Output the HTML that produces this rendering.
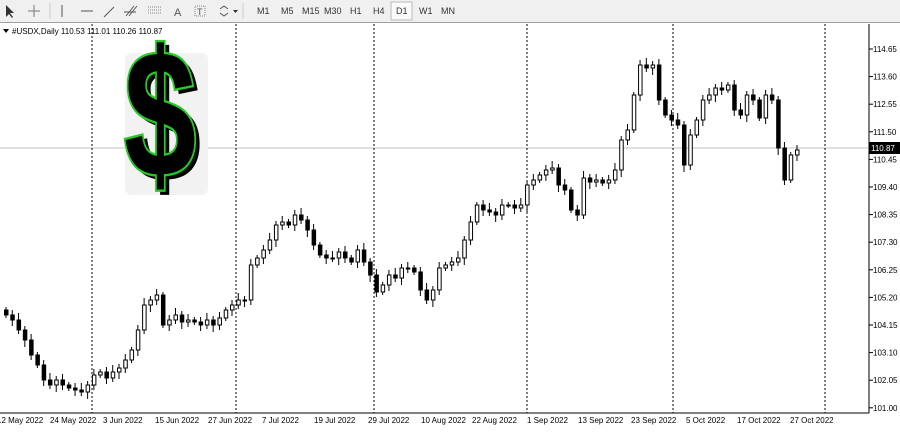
<!DOCTYPE html>
<html><head><meta charset="utf-8"><style>
body{margin:0;width:900px;height:433px;overflow:hidden;background:#fff;font-family:"Liberation Sans",sans-serif;position:relative}
.tb{position:absolute;left:0;top:0;width:900px;height:22px;background:#f0f0f0;border-bottom:1px solid #a0a0a0;font-size:9px;color:#333}
.tb span{position:absolute;top:6px}
</style></head><body>
<div class="tb">
<svg width="470" height="22" style="position:absolute;left:0;top:0">
<path d="M6 5 L6 17 L9 14 L12 18 L13 17 L10 13 L14 13 Z" fill="#333"/>
<path d="M34 5v12M28 11h12" stroke="#777" stroke-width="1"/>
<path d="M50 3v16M243 3v16" stroke="#ccc"/>
<path d="M62 5v12" stroke="#555"/><path d="M81 11h12" stroke="#555"/><path d="M104 17l10-10" stroke="#555"/>
<path d="M126 16l8-10M129 16l8-10M124 12h12" stroke="#555"/>
<path d="M148 7h14M148 10h14M148 13h14" stroke="#888" stroke-dasharray="1,1"/>
<text x="174" y="16" font-size="11" fill="#555">A</text>
<rect x="195" y="6" width="10" height="10" fill="none" stroke="#888" stroke-dasharray="1,1"/><text x="197" y="15" font-size="9" fill="#555">T</text>
<path d="M220 9l4-3 4 3M220 13l4 3 4-3" stroke="#555" fill="none"/><path d="M233 10h5l-2.5 3z" fill="#333"/>
<rect x="391" y="2" width="21" height="18" fill="#fafafa" stroke="#bbb"/>
</svg>
<span style="left:257px">M1</span><span style="left:281px">M5</span><span style="left:302px">M15</span><span style="left:324px">M30</span><span style="left:350px">H1</span><span style="left:373px">H4</span><span style="left:396px">D1</span><span style="left:419px">W1</span><span style="left:441px">MN</span>
</div>
<svg width="900" height="411" style="position:absolute;left:0;top:22px">
<g transform="translate(0,-22)">
<line x1="0" y1="148" x2="868" y2="148" stroke="#c0c0c0"/>
<g stroke="#000" stroke-dasharray="2,2">
<line x1="92" y1="24" x2="92" y2="413"/><line x1="236" y1="24" x2="236" y2="413"/><line x1="374" y1="24" x2="374" y2="413"/><line x1="527" y1="24" x2="527" y2="413"/><line x1="673" y1="24" x2="673" y2="413"/><line x1="825" y1="24" x2="825" y2="413"/>
</g>
<rect x="125" y="53" width="83" height="142" rx="7" fill="#f2f2f2"/>
<g transform="translate(124,180) scale(0.72,1)">
<text x="6" y="0" font-size="180" font-weight="bold" fill="#111" stroke="#000" stroke-width="3">$</text>
<text x="0" y="-4" font-size="180" font-weight="bold" fill="#000" stroke="#27c927" stroke-width="5" paint-order="stroke">$</text>
<text x="0" y="-4" font-size="180" font-weight="bold" fill="#000">$</text>
</g>
<g id="cd"></g>
<line x1="869" y1="24" x2="869" y2="413" stroke="#000"/>
<line x1="0" y1="413" x2="869" y2="413" stroke="#000"/>
<rect x="869" y="142" width="31" height="12" fill="#000"/>
<text x="871" y="151" font-size="8" fill="#fff">110.87</text>
<g font-size="8" fill="#000" id="ax"></g>
<g font-size="8" fill="#000">
<text x="-3" y="423">12 May 2022</text><text x="50" y="423">24 May 2022</text><text x="103" y="423">3 Jun 2022</text><text x="155" y="423">15 Jun 2022</text><text x="208" y="423">27 Jun 2022</text><text x="262" y="423">7 Jul 2022</text><text x="314" y="423">19 Jul 2022</text><text x="368" y="423">29 Jul 2022</text><text x="421" y="423">10 Aug 2022</text><text x="472" y="423">22 Aug 2022</text><text x="527" y="423">1 Sep 2022</text><text x="578" y="423">13 Sep 2022</text><text x="631" y="423">23 Sep 2022</text><text x="686" y="423">5 Oct 2022</text><text x="737" y="423">17 Oct 2022</text><text x="790" y="423">27 Oct 2022</text>
<path d="M3 29h6l-3 4z" fill="#000"/>
<text x="12" y="34">#USDX,Daily  110.53 111.01 110.26 110.87</text>
</g>
</g>
</svg>
<script>
var c=[315,320,330,340,355,365,380,385,380,385,388,390,392,385,375,372,378,372,368,360,350,330,305,300,295,325,320,315,322,320,322,325,320,325,318,310,305,300,300,265,258,250,240,225,222,225,215,220,230,245,255,258,258,252,258,262,250,262,275,292,285,275,278,268,268,272,290,300,290,268,265,262,258,240,222,205,210,212,215,205,205,208,205,185,180,175,170,168,185,190,210,215,178,182,180,183,180,170,140,130,95,65,68,65,100,115,120,125,165,135,120,100,95,88,90,85,110,115,95,100,118,95,100,148,180,155,150];
var s='',p=310,n=c.length,st=791/(n-1);
for(var i=0;i<n;i++){var x=4+i*st,o=p,cl=c[i];var hi=Math.min(o,cl)-3-(i*7%5),lo=Math.max(o,cl)+3+(i*3%5);
var bull=cl<o;var t=Math.min(o,cl),h=Math.max(1,Math.abs(o-cl));
s+='<line x1="'+(x+2)+'" y1="'+hi+'" x2="'+(x+2)+'" y2="'+lo+'" stroke="#000"/>';
s+='<rect x="'+(x+0.5)+'" y="'+t+'" width="3.5" height="'+h+'" fill="'+(bull?'#fff':'#000')+'" stroke="#000"/>';p=cl;}
document.getElementById('cd').innerHTML=s;
var a='';for(var k=0;k<14;k++){var v=114.65-k*1.05,y=49+k*27.6;a+='<line x1="869" y1="'+y+'" x2="873" y2="'+y+'" stroke="#000"/><text x="873" y="'+(y+3)+'">'+v.toFixed(2)+'</text>';}
document.getElementById('ax').innerHTML=a;
</script>
</body></html>
